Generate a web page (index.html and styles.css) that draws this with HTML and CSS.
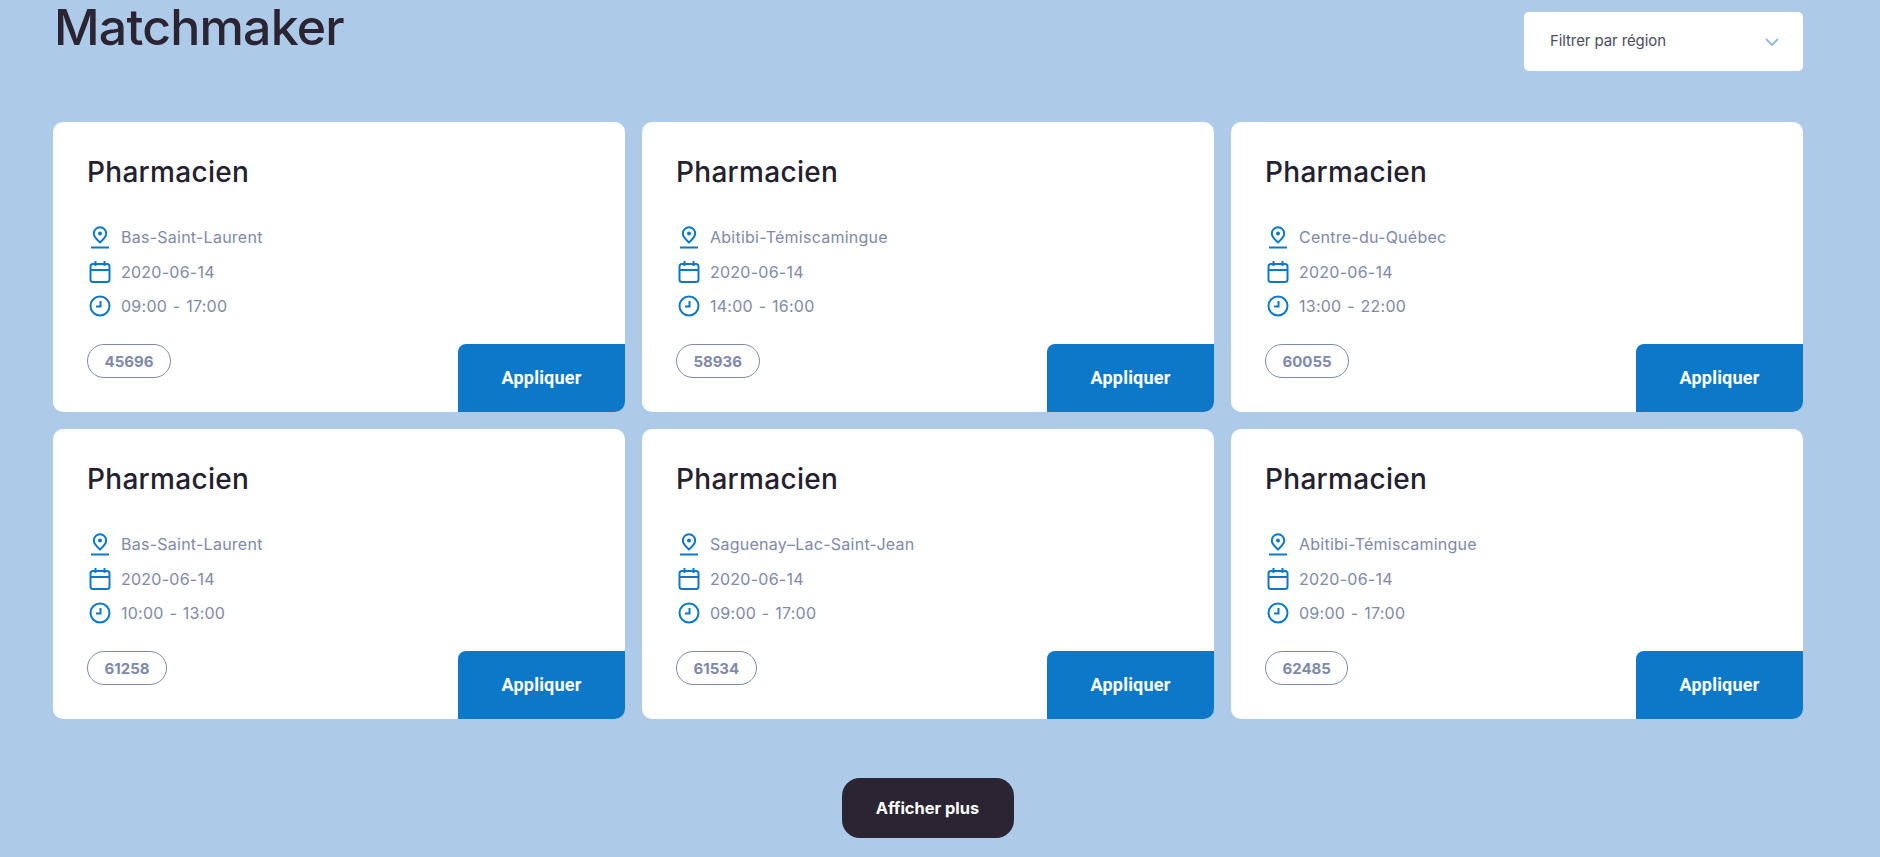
FILE: index.html
```html
<!DOCTYPE html>
<html lang="fr">
<head>
<meta charset="utf-8">
<title>Matchmaker</title>
<link rel="stylesheet" href="styles.css">
</head>
<body>
<svg class="defs" width="0" height="0" aria-hidden="true">
  <symbol id="pin" viewBox="0 0 22 24"><g fill="none" stroke="#0e78c8" stroke-width="2"><path d="M11 17.5c-3.4-3-6.200-5.700-6.200-9a6.200 6.200 0 0 1 12.400 0c0 3.300-2.800 6-6.200 9z"/><path d="M2 22.500h18"/></g><circle cx="11" cy="8.500" r="2" fill="#0e78c8"/></symbol>
  <symbol id="cal" viewBox="0 0 22 24"><g fill="none" stroke="#0e78c8" stroke-width="2"><rect x="1.500" y="4" width="19" height="18" rx="2.500"/><path d="M1.500 10h19M6.500 1v5M15.500 1v5"/></g></symbol>
  <symbol id="clock" viewBox="0 0 22 24"><g fill="none" stroke="#0e78c8" stroke-width="2"><circle cx="11" cy="12" r="9.500"/><path d="M11.500 7v5.500H7"/></g></symbol>
</svg>
<main class="page">
  <header class="top">
    <h1 class="heading">Matchmaker</h1>
    <div class="select"><span>Filtrer par région</span>
      <svg class="chevron" width="14" height="8" viewBox="0 0 14 8"><path d="M1 1l6 6 6-6" fill="none" stroke="#8db8e2" stroke-width="1.800"/></svg>
    </div>
  </header>
  <section class="grid">
    <article class="card">
      <h2 class="title">Pharmacien</h2>
      <ul class="meta">
        <li><svg class="ico"><use href="#pin"/></svg>Bas-Saint-Laurent</li>
        <li><svg class="ico"><use href="#cal"/></svg>2020-06-14</li>
        <li><svg class="ico"><use href="#clock"/></svg>09:00 - 17:00</li>
      </ul>
      <div class="foot"><span class="pill">45696</span><a class="apply">Appliquer</a></div>
    </article>
    <article class="card">
      <h2 class="title">Pharmacien</h2>
      <ul class="meta">
        <li><svg class="ico"><use href="#pin"/></svg>Abitibi-Témiscamingue</li>
        <li><svg class="ico"><use href="#cal"/></svg>2020-06-14</li>
        <li><svg class="ico"><use href="#clock"/></svg>14:00 - 16:00</li>
      </ul>
      <div class="foot"><span class="pill">58936</span><a class="apply">Appliquer</a></div>
    </article>
    <article class="card">
      <h2 class="title">Pharmacien</h2>
      <ul class="meta">
        <li><svg class="ico"><use href="#pin"/></svg>Centre-du-Québec</li>
        <li><svg class="ico"><use href="#cal"/></svg>2020-06-14</li>
        <li><svg class="ico"><use href="#clock"/></svg>13:00 - 22:00</li>
      </ul>
      <div class="foot"><span class="pill">60055</span><a class="apply">Appliquer</a></div>
    </article>
    <article class="card">
      <h2 class="title">Pharmacien</h2>
      <ul class="meta">
        <li><svg class="ico"><use href="#pin"/></svg>Bas-Saint-Laurent</li>
        <li><svg class="ico"><use href="#cal"/></svg>2020-06-14</li>
        <li><svg class="ico"><use href="#clock"/></svg>10:00 - 13:00</li>
      </ul>
      <div class="foot"><span class="pill">61258</span><a class="apply">Appliquer</a></div>
    </article>
    <article class="card">
      <h2 class="title">Pharmacien</h2>
      <ul class="meta">
        <li><svg class="ico"><use href="#pin"/></svg>Saguenay–Lac-Saint-Jean</li>
        <li><svg class="ico"><use href="#cal"/></svg>2020-06-14</li>
        <li><svg class="ico"><use href="#clock"/></svg>09:00 - 17:00</li>
      </ul>
      <div class="foot"><span class="pill">61534</span><a class="apply">Appliquer</a></div>
    </article>
    <article class="card">
      <h2 class="title">Pharmacien</h2>
      <ul class="meta">
        <li><svg class="ico"><use href="#pin"/></svg>Abitibi-Témiscamingue</li>
        <li><svg class="ico"><use href="#cal"/></svg>2020-06-14</li>
        <li><svg class="ico"><use href="#clock"/></svg>09:00 - 17:00</li>
      </ul>
      <div class="foot"><span class="pill">62485</span><a class="apply">Appliquer</a></div>
    </article>
  </section>
  <div class="more-wrap"><a class="more">Afficher plus</a></div>
</main>
</body>
</html>
```

FILE: styles.css
```css
html, body { margin: 0; padding: 0; height: 100%; overflow: hidden; }
body { background: #adcbe9; font-family: Inter, "Liberation Sans", sans-serif; color: #2a2433; }
.defs { position: absolute; }
.page { padding: 0 77px 0 53px; }
.top { display: flex; justify-content: space-between; align-items: flex-start; height: 122px; }
.heading { margin: 0 0 0 1px; font-size: 50px; line-height: 54px; font-weight: 500; letter-spacing: -0.8px; color: #2a2433; }
.select { margin-top: 12px; width: 279px; height: 59px; box-sizing: border-box; padding: 0 24px 0 26px; background: #fff; border-radius: 5px; display: flex; align-items: center; justify-content: space-between; font-size: 15px; letter-spacing: -0.1px; color: #4c4c60; }
.select span { margin-top: -2px; }
.grid { display: grid; grid-template-columns: repeat(3, 572px); grid-auto-rows: 290px; gap: 17px; }
.card { background: #fff; border-radius: 10px; overflow: hidden; display: flex; flex-direction: column; padding-left: 34px; }
.title { margin: 32px 0 0; font-size: 28px; line-height: 36px; font-weight: 500; letter-spacing: 0.3px; color: #23202f; }
.meta { list-style: none; margin: 30px 0 0; padding: 0; flex: 1; }
.meta li { display: flex; align-items: center; height: 34.5px; font-size: 16px; letter-spacing: 0.25px; word-spacing: 1px; color: #8089a8; }
.ico { width: 22px; height: 24px; margin: 0 10px 0 2px; flex: none; }
.foot { display: flex; justify-content: space-between; align-items: flex-start; height: 68px; }
.pill { box-sizing: border-box; height: 34px; padding: 0 16.500px; border: 1px solid #8089a8; border-radius: 17px; display: flex; align-items: center; font-size: 15px; font-weight: 700; color: #8089a8; }
.apply { width: 167px; height: 68px; padding-bottom: 2px; box-sizing: border-box; background: #0e78c8; border-top-left-radius: 8px; display: flex; align-items: center; justify-content: center; font-family: Roboto, sans-serif; font-size: 18px; letter-spacing: 0.2px; font-weight: 700; color: #fff; }
.more-wrap { display: flex; justify-content: center; margin-top: 59px; padding-right: 1px; }
.more { width: 172px; height: 60px; background: #2a2433; border-radius: 18px; display: flex; align-items: center; justify-content: center; font-size: 16.4px; font-weight: 700; color: #fff; }
```
